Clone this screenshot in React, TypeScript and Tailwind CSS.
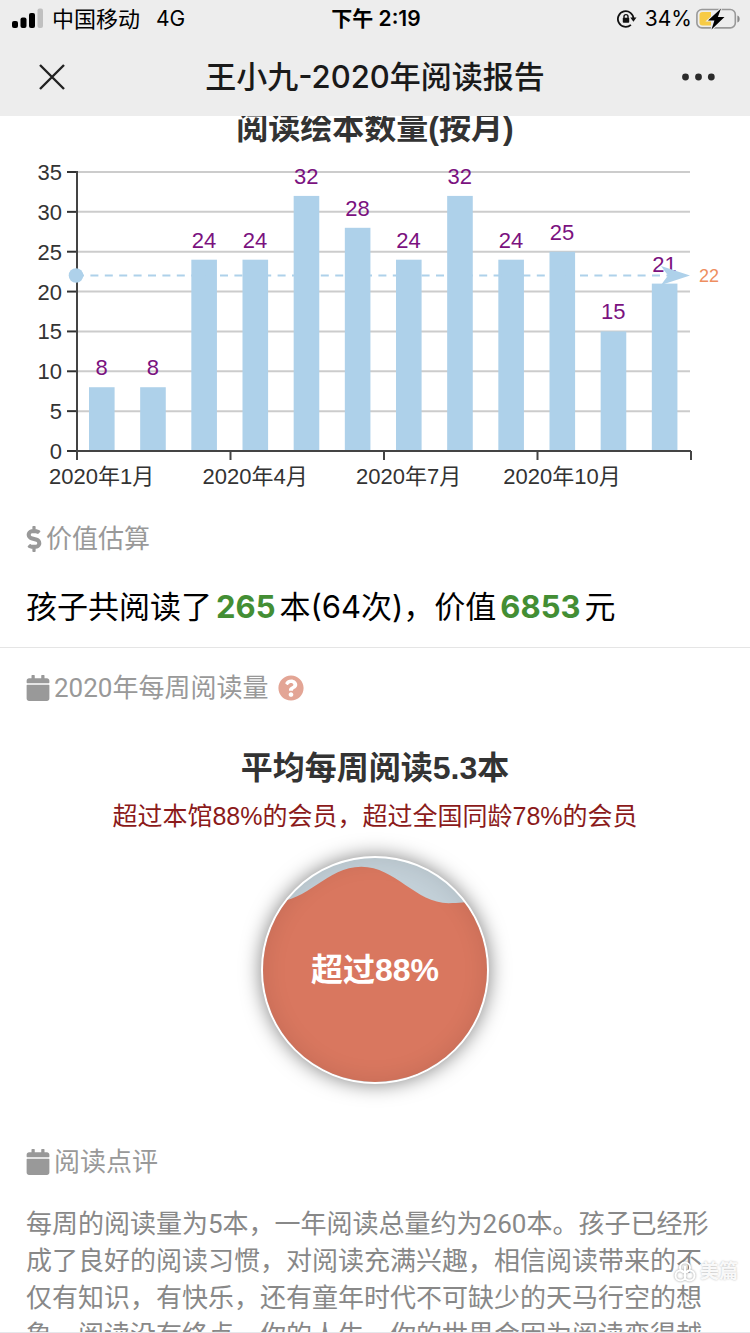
import type { ReactNode } from "react";
import { FaCalendar, FaDollarSign, FaQuestionCircle } from "react-icons/fa";

const months = [8, 8, 24, 24, 32, 28, 24, 32, 24, 25, 15, 21];
const yTicks = [0, 5, 10, 15, 20, 25, 30, 35];
const xLabels = ["2020年1月", "2020年4月", "2020年7月", "2020年10月"];

const LEFT = 77;
const RIGHT = 691;
const BASE = 307;
const TOP = 28;
const BAND = (RIGHT - LEFT) / months.length;

const yOf = (value: number) => BASE - (value / 35) * (BASE - TOP);

const StatusBar = () => (
  <div className="grid h-[38px] grid-cols-3 items-center pl-3 pr-2.5 text-[21px] leading-6 text-black">
    <div className="flex items-center">
      <svg width="32" height="22" viewBox="0 0 32 22" className="shrink-0">
        <rect x="0" y="13" width="6" height="7" rx="2" />
        <rect x="8.5" y="9.5" width="6" height="10.5" rx="2" />
        <rect x="17" y="5" width="6" height="15" rx="2" />
        <rect x="25.5" y="0.5" width="5.5" height="19.5" rx="2" fill="#c0c0c0" />
      </svg>
      <span className="ml-2 text-[22px]">中国移动</span>
      <span className="ml-4">4G</span>
    </div>
    <div className="text-center font-semibold">下午 2:19</div>
    <div className="flex items-center justify-end">
      <svg width="20" height="20" viewBox="0 0 20 20" fill="none" className="mr-2">
        <path d="M16.5 10a7.8 7.8 0 1 0-2.6 5.8" stroke="#111" strokeWidth="1.8" />
        <path d="M13.3 8.6h6.2l-3.1 4.2z" fill="#111" />
        <path d="M7 9V7.6a2 2 0 0 1 4 0V9" stroke="#111" strokeWidth="1.4" />
        <rect x="5.8" y="8.8" width="6.4" height="5" rx="0.8" fill="#111" />
      </svg>
      <span>34%</span>
      <svg width="44" height="24" viewBox="0 0 44 24" className="ml-1">
        <rect x="0.9" y="2.5" width="38.4" height="18.4" rx="5" fill="none" stroke="#999" strokeWidth="1.6" />
        <path d="M41.4 8.5c3 .8 3 6.2 0 7z" fill="#888" />
        <path d="M6.5 5H15v13.4H6.5a3 3 0 0 1-3-3V8a3 3 0 0 1 3-3z" fill="#f7cb46" />
        <path
          d="M25 1.5 12 13.4h6.4L15.5 22.6l13-12.6h-6.6z"
          fill="#000"
          stroke="#ededed"
          strokeWidth="2"
          paintOrder="stroke"
        />
      </svg>
    </div>
  </div>
);

const NavBar = () => (
  <div className="flex h-[78px] items-center justify-between px-8">
    <button type="button" aria-label="关闭" className="flex w-10 justify-center">
      <svg width="28" height="28" viewBox="0 0 28 28" stroke="#222" strokeWidth="2.4">
        <path d="M2 2l24 24M26 2 2 26" />
      </svg>
    </button>
    <h1 className="text-[31px] font-medium leading-10 text-[#1a1a1a]">王小九-2020年阅读报告</h1>
    <button type="button" aria-label="更多" className="flex w-10 justify-center">
      <svg width="34" height="8" viewBox="0 0 34 8" fill="#2b2b2b" className="shrink-0">
        <circle cx="4.5" cy="4" r="3.4" />
        <circle cx="17.5" cy="4" r="3.4" />
        <circle cx="30.3" cy="4" r="3.4" />
      </svg>
    </button>
  </div>
);

const MonthlyChart = () => (
  <svg
    viewBox="0 0 750 355"
    className="block w-full font-['Liberation_Sans','Noto_Sans_CJK_SC',sans-serif] text-[22px]"
  >
    {yTicks.map((tick) => (
      <g key={tick}>
        {tick > 0 && <path d={`M${LEFT} ${yOf(tick)}H690`} stroke="#ccc" strokeWidth="2" />}
        <path d={`M67 ${yOf(tick)}H${LEFT}`} stroke="#333" strokeWidth="2" />
        <text x="62" y={yOf(tick) + 8} textAnchor="end" fill="#333">
          {tick}
        </text>
      </g>
    ))}

    {months.map((value, i) => (
      <rect
        key={i}
        x={LEFT + BAND * i + 12}
        y={yOf(value)}
        width="25.6"
        height={BASE - yOf(value)}
        fill="#aed1ea"
      />
    ))}

    {/* Axes */}
    <path d={`M${LEFT} ${TOP - 1}V${BASE + 9}M${LEFT} ${BASE}H${RIGHT}`} stroke="#444" strokeWidth="2" fill="none" />
    {[3, 6, 9, 12].map((i) => (
      <path key={i} d={`M${LEFT + BAND * i} ${BASE}v9`} stroke="#444" strokeWidth="2" />
    ))}
    {xLabels.map((label, i) => (
      <text key={label} x={LEFT + BAND * (i * 3 + 0.5) - 1} y="340" textAnchor="middle" fill="#333">
        {label}
      </text>
    ))}

    {months.map((value, i) => (
      <text key={i} x={LEFT + BAND * (i + 0.5) - 1} y={yOf(value) - 12} textAnchor="middle" fill="#7b127f">
        {value}
      </text>
    ))}

    {/* Average line */}
    <path d="M76 131.5H668" stroke="#aed1ea" strokeWidth="2" strokeDasharray="8 6.4" />
    <circle cx="76" cy="131.5" r="7.3" fill="#aed1ea" />
    <path d="M690 131.5 661 122l7 9.5-7 9.5z" fill="#aed1ea" />
    <text x="699" y="138" fill="#ee8e60" className="text-[18px]">
      22
    </text>
  </svg>
);

const SectionTitle = ({ icon, children }: { icon: ReactNode; children: ReactNode }) => (
  <h2 className="flex items-center font-['Roboto','Noto_Sans_CJK_SC',sans-serif] text-[26px] leading-8 text-[#999]">
    {icon}
    {children}
  </h2>
);

const WaveBall = () => (
  <div className="relative mx-auto mt-6 flex size-[228px] items-center justify-center overflow-hidden rounded-full border-2 border-white bg-[#c3d0d8] shadow-[0_0_20px_rgba(0,0,0,0.5)]">
    <svg viewBox="0 0 228 228" className="absolute inset-0 size-full">
      <path
        d="M-30 20C-15 35-5 45 11 45C45 45 65 9 100 9S155 46 189 46S225 38 245 20V228H-30z"
        fill="#d9775f"
      />
    </svg>
    <div className="absolute inset-0 rounded-full shadow-[inset_0_0_24px_rgba(0,0,0,0.1)]" />
    <span className="relative font-['Liberation_Sans','Noto_Sans_CJK_SC',sans-serif] text-[32px] font-bold leading-10 text-white">
      超过88%
    </span>
  </div>
);

const Watermark = () => (
  <div className="absolute bottom-12 right-3 flex items-center gap-1 text-[19px] font-bold leading-6 text-white/90 [text-shadow:0_0_2px_rgba(0,0,0,0.3)]">
    <svg width="22" height="22" viewBox="0 0 22 22" fill="none" stroke="#fff" strokeWidth="2" className="drop-shadow-[0_0_1px_rgba(0,0,0,0.4)]">
      <circle cx="11" cy="6.5" r="5" />
      <circle cx="6.5" cy="14.5" r="5" />
      <circle cx="15.5" cy="14.5" r="5" />
      <path d="M11 5v14" />
    </svg>
    美篇
  </div>
);

export default function App() {
  return (
    <div className="relative flex h-screen flex-col overflow-hidden border-b border-gray-200 bg-white font-['Inter','Noto_Sans_CJK_SC',sans-serif]">
      <header className="shrink-0 bg-[#ededed]">
        <StatusBar />
        <NavBar />
      </header>

      <main className="min-h-0 flex-1 overflow-hidden">
        <section>
          <h2 className="-mt-1 text-center font-['Liberation_Sans','Noto_Sans_CJK_SC',sans-serif] text-[32px] font-bold leading-8 text-[#333]">
            阅读绘本数量(按月)
          </h2>
          <MonthlyChart />
        </section>

        <section className="border-b border-[#e5e5e5] px-[26px] pb-5 pt-6">
          <SectionTitle icon={<FaDollarSign className="mr-1 h-[26px] w-4" />}>价值估算</SectionTitle>
          <p className="mt-8 text-[31px] leading-10 text-black">
            孩子共阅读了
            <strong className="mx-1 font-bold text-[#438e34]">265</strong>
            本(64次)，价值
            <strong className="mx-1 font-bold text-[#438e34]">6853</strong>元
          </p>
        </section>

        <section className="px-[26px] pt-6">
          <SectionTitle icon={<FaCalendar className="mr-1 h-[26px] w-6" />}>
            2020年每周阅读量
            <button type="button" aria-label="说明" className="ml-2.5 text-[#e3a595]">
              <FaQuestionCircle className="size-[26px]" />
            </button>
          </SectionTitle>
          <h3 className="mt-11 text-center font-['Liberation_Sans','Noto_Sans_CJK_SC',sans-serif] text-[32px] font-bold leading-10 text-[#333]">
            平均每周阅读5.3本
          </h3>
          <p className="mt-3 text-center font-['Liberation_Sans','Noto_Sans_CJK_SC',sans-serif] text-[25px] leading-8 text-[#8b1a1a]">
            超过本馆88%的会员，超过全国同龄78%的会员
          </p>
          <WaveBall />
        </section>

        <section className="mt-[62px] px-[26px]">
          <SectionTitle icon={<FaCalendar className="mr-1 h-[26px] w-6" />}>阅读点评</SectionTitle>
          <p className="mt-7 font-['Roboto','Noto_Sans_CJK_SC',sans-serif] text-[26px] leading-[37px] text-[#888]">
            每周的阅读量为5本，一年阅读总量约为260本。孩子已经形成了良好的阅读习惯，对阅读充满兴趣，相信阅读带来的不仅有知识，有快乐，还有童年时代不可缺少的天马行空的想象。阅读没有终点，你的人生，你的世界会因为阅读变得越
          </p>
        </section>
      </main>
      <Watermark />
    </div>
  );
}
